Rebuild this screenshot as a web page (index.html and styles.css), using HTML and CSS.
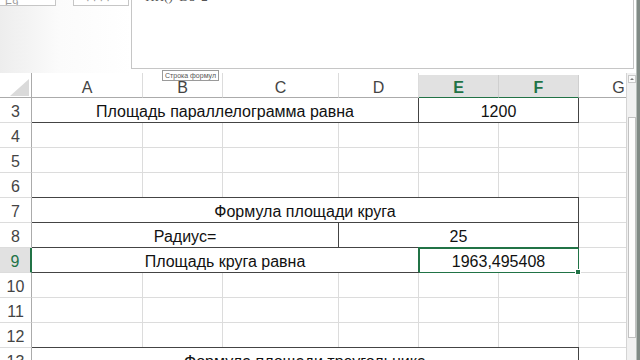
FILE: index.html
```html
<!DOCTYPE html>
<html lang="ru">
<head>
    <meta charset="UTF-8">
    <meta name="viewport" content="width=device-width, initial-scale=1.0">
    <title>Площадь фигур</title>
    <link rel="stylesheet" href="styles.css">
</head>
<body>
    <div class="window">
        <div class="main">
            <div class="toolbar">
                <div class="namebar">
                    <div class="namebox">E9</div>
                    <div class="fxbox">· · · ·</div>
                </div>
                <div class="formula">
                    <div class="formula-text">=ПИ()*D8^2</div>
                </div>
                <div class="tip">Строка формул</div>
            </div>

            <div class="sheet">
                <div class="grid">
                    <div class="row head">
                        <div class="c corner"><span class="tri"></span></div>
                        <div class="c">A</div>
                        <div class="c">B</div>
                        <div class="c">C</div>
                        <div class="c">D</div>
                        <div class="c hl">E</div>
                        <div class="c hl">F</div>
                        <div class="c">G</div>
                    </div>

                    <div class="row">
                        <div class="c rh">3</div>
                        <div class="c s4 bx">Площадь параллелограмма равна</div>
                        <div class="c s2 bx">1200</div>
                        <div class="c"></div>
                    </div>

                    <div class="row">
                        <div class="c rh">4</div>
                        <div class="c"></div><div class="c"></div><div class="c"></div><div class="c"></div>
                        <div class="c"></div><div class="c"></div><div class="c"></div>
                    </div>

                    <div class="row">
                        <div class="c rh">5</div>
                        <div class="c"></div><div class="c"></div><div class="c"></div><div class="c"></div>
                        <div class="c"></div><div class="c"></div><div class="c"></div>
                    </div>

                    <div class="row">
                        <div class="c rh">6</div>
                        <div class="c"></div><div class="c"></div><div class="c"></div><div class="c"></div>
                        <div class="c"></div><div class="c"></div><div class="c"></div>
                    </div>

                    <div class="row">
                        <div class="c rh">7</div>
                        <div class="c s6 bx bt">Формула площади круга</div>
                        <div class="c"></div>
                    </div>

                    <div class="row">
                        <div class="c rh">8</div>
                        <div class="c s3 bx bt">Радиус=</div>
                        <div class="c s3 bx bt">25</div>
                        <div class="c"></div>
                    </div>

                    <div class="row">
                        <div class="c rh on">9</div>
                        <div class="c s4 bx">Площадь круга равна</div>
                        <div class="c s2 sel">1963,495408</div>
                        <div class="c"></div>
                    </div>

                    <div class="row">
                        <div class="c rh">10</div>
                        <div class="c"></div><div class="c"></div><div class="c"></div><div class="c"></div>
                        <div class="c"></div><div class="c"></div><div class="c"></div>
                    </div>

                    <div class="row">
                        <div class="c rh">11</div>
                        <div class="c"></div><div class="c"></div><div class="c"></div><div class="c"></div>
                        <div class="c"></div><div class="c"></div><div class="c"></div>
                    </div>

                    <div class="row">
                        <div class="c rh">12</div>
                        <div class="c"></div><div class="c"></div><div class="c"></div><div class="c"></div>
                        <div class="c"></div><div class="c"></div><div class="c"></div>
                    </div>

                    <div class="row">
                        <div class="c rh">13</div>
                        <div class="c s6 bx bt">Формула площади треугольника</div>
                        <div class="c"></div>
                    </div>
                </div>

                <div class="vscroll">
                    <div class="up"></div>
                    <div class="thumb"></div>
                </div>
            </div>
        </div>
        <div class="edge"></div>
    </div>
</body>
</html>
```

FILE: styles.css
```css
body {
    margin: 0;
    font-family: 'Liberation Sans', Arial, sans-serif;
    background-color: #fff;
    color: #111;
    overflow: hidden;
}

.window {
    display: flex;
    width: 640px;
    height: 360px;
    overflow: hidden;
}

.main {
    width: 636px;
    display: flex;
    flex-direction: column;
}

.edge {
    width: 4px;
    background-color: #808a85;
    border-left: 1px solid #b9c0bc;
    box-sizing: border-box;
}

/* formula bar area */
.toolbar {
    position: relative;
    height: 73px;
    flex-shrink: 0;
    display: flex;
    background-color: #fff;
}

.namebar {
    width: 131px;
    display: flex;
    gap: 17px;
    align-items: flex-start;
    background: linear-gradient(to right, #ededed, #fbfbfb 45%, #fff);
}

.namebox, .fxbox {
    height: 6px;
    background-color: #fff;
    border-right: 1px solid #c6c6c6;
    border-bottom: 1px solid #c6c6c6;
    box-sizing: border-box;
    font-size: 11px;
    line-height: 6px;
    color: #999;
    overflow: hidden;
}

.namebox {
    width: 56px;
    padding-left: 5px;
}

.fxbox {
    width: 56px;
    border-left: 1px solid #c6c6c6;
    padding-left: 12px;
    line-height: 0;
}

.formula {
    width: 503px;
    height: 69px;
    border: 1px solid #c6c6c6;
    border-top: none;
    box-sizing: border-box;
    background-color: #fff;
    overflow: hidden;
}

.formula-text {
    margin-top: -10px;
    padding-left: 6px;
    font-family: 'Liberation Serif', serif;
    font-size: 13px;
    line-height: 14px;
    color: #555;
}

.tip {
    position: absolute;
    left: 162px;
    top: 70px;
    height: 9px;
    padding: 0 2px;
    border: 1px solid #9a9a9a;
    background-color: #fff;
    font-size: 7px;
    line-height: 9px;
    color: #555;
    white-space: nowrap;
    z-index: 2;
}

/* sheet */
.sheet {
    display: flex;
    flex: 1;
    min-height: 0;
}

.grid {
    width: 626px;
    overflow: hidden;
}

.row {
    display: grid;
    grid-template-columns: 32px 111px 80px 116px 80px 80px 80px 80px;
    height: 25px;
}

.c {
    box-sizing: border-box;
    border-right: 1px solid #dcdcdc;
    border-bottom: 1px solid #dcdcdc;
    padding-top: 4px;
    line-height: 20px;
    font-size: 16px;
    text-align: center;
    white-space: nowrap;
    overflow: hidden;
}

.s2 { grid-column: span 2; }
.s3 { grid-column: span 3; }
.s4 { grid-column: span 4; }
.s6 { grid-column: span 6; }

.head .c {
    padding-top: 5px;
    color: #444;
    border-bottom-color: #ababab;
}

.head .corner {
    display: flex;
    justify-content: flex-end;
    align-items: flex-end;
    padding: 0 2px 1px 0;
    border-right-color: #ababab;
}

.tri {
    width: 0;
    height: 0;
    border-left: 19px solid transparent;
    border-bottom: 17px solid #dadada;
}

.head .hl {
    margin-top: 2px;
    padding-top: 3px;
    background-color: #e1e1e1;
    color: #217346;
    font-weight: bold;
    border-right-color: #cfcfcf;
    border-bottom: 1px solid #217346;
}

.rh {
    color: #444;
    border-right-color: #ababab;
}

.rh.on {
    background-color: #e1e1e1;
    color: #217346;
    border-right: 2px solid #217346;
}

.bx {
    border-right-color: #444;
    border-bottom-color: #444;
    color: #111;
}

.bt {
    box-shadow: 0 -1px 0 #444;
}

.sel {
    position: relative;
    overflow: visible;
    border-right: 1px solid #217346;
    border-bottom: 1px solid #217346;
    box-shadow: -1px -1px 0 #217346, inset 1px 1px 0 #217346;
}

.sel::after {
    content: "";
    position: absolute;
    right: -3px;
    bottom: -3px;
    width: 4px;
    height: 4px;
    background-color: #217346;
    border: 1px solid #fff;
}

/* vertical scrollbar */
.vscroll {
    width: 10px;
    background-color: #f1f1f1;
    border-left: 1px solid #d4d4d4;
    box-sizing: border-box;
    display: flex;
    flex-direction: column;
    align-items: center;
}

.up {
    margin-top: 2px;
    width: 8px;
    height: 8px;
    box-sizing: border-box;
    border: 1px solid #c9c9c9;
    background-color: #fafafa;
    position: relative;
}

.up::before {
    content: "";
    position: absolute;
    left: 1px;
    top: 2px;
    border-left: 2px solid transparent;
    border-right: 2px solid transparent;
    border-bottom: 2px solid #777;
}

.thumb {
    margin-top: 34px;
    width: 8px;
    height: 221px;
    box-sizing: border-box;
    border: 1px solid #c2c2c2;
    background-color: #fdfdfd;
}
```
